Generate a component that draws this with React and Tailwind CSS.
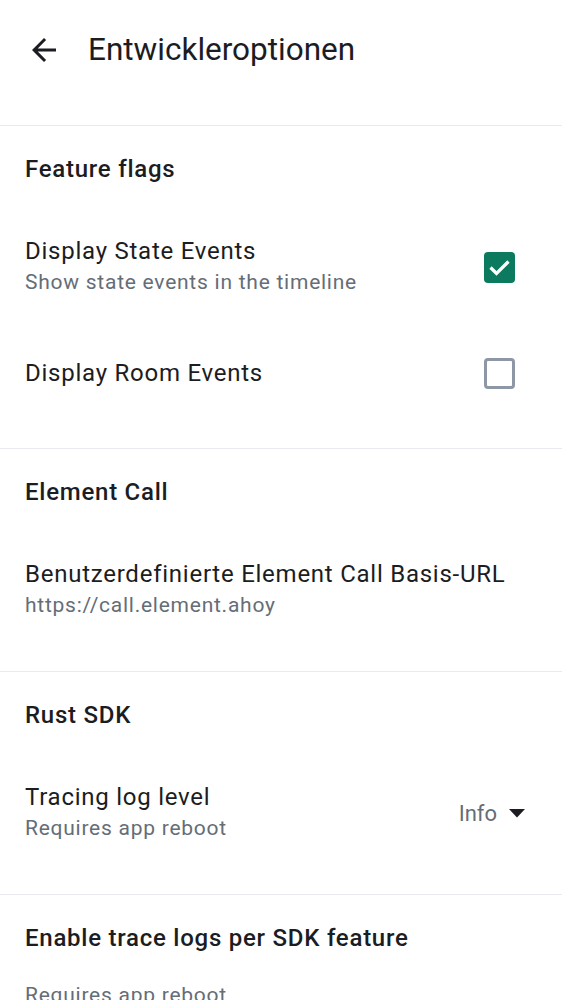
import React from 'react';

const Divider = () => <div className="h-px bg-[#e8eaed]" />;

const SectionHeader = ({ children }) => (
    <div className="h-[85px] flex items-center px-[25px]">
        <h2 className="text-[24px] leading-[30px] font-medium tracking-[0.75px] text-[#1b1d22]">{children}</h2>
    </div>
);

const Checkbox = ({ checked }) => (
    <div className="mr-[22px]">
        {checked ? (
            <div className="w-[31px] h-[31px] rounded-[4px] bg-[#0b7a5e] flex items-center justify-center">
                <svg width="31" height="31" viewBox="0 0 31 31" fill="none">
                    <path d="M6.5 15.5 L12.5 21.5 L24.5 9.5" stroke="white" strokeWidth="3.2" />
                </svg>
            </div>
        ) : (
            <div className="w-[31px] h-[31px] rounded-[4px] border-[3px] border-[#8d97a5]" />
        )}
    </div>
);

const PrefItem = ({ title, subtitle, right, height }) => (
    <div className={`flex items-center px-[25px] ${height}`}>
        <div className="flex-1 min-w-0">
            <p className="text-[24px] leading-[31px] tracking-[0.75px] text-[#1b1d22]">{title}</p>
            {subtitle && (
                <p className="text-[21px] leading-[31px] tracking-[0.75px] text-[#656d77]">{subtitle}</p>
            )}
        </div>
        {right}
    </div>
);

const Dropdown = ({ value }) => (
    <div className="flex items-center gap-[12px] pr-[12px]">
        <span className="text-[22px] text-[#656d77]">{value}</span>
        <svg width="16" height="9" viewBox="0 0 16 9">
            <path d="M0 0 L16 0 L8 8.5 Z" fill="#1b1d22" />
        </svg>
    </div>
);

export default function App() {
    return (
        <div className="w-[562px] h-[1000px] overflow-hidden bg-white font-['Roboto',sans-serif]">
            <header className="h-[100px] flex items-center">
                <button className="w-[36px] h-[36px] ml-[26px] flex items-center justify-center text-[#1b1d22]">
                    <svg width="36" height="36" viewBox="0 0 24 24" fill="currentColor">
                        <path d="M20 11H7.83l5.59-5.59L12 4l-8 8 8 8 1.41-1.41L7.83 13H20v-2z" />
                    </svg>
                </button>
                <h1 className="ml-[26px] text-[31.5px] text-[#1b1d22]">Entwickleroptionen</h1>
            </header>
            <div className="h-[25px]" />

            <Divider />
            <SectionHeader>Feature flags</SectionHeader>
            <PrefItem
                height="h-[112px]"
                title="Display State Events"
                subtitle="Show state events in the timeline"
                right={<Checkbox checked />}
            />
            <PrefItem height="h-[100px]" title="Display Room Events" right={<Checkbox />} />
            <div className="h-[25px]" />

            <Divider />
            <SectionHeader>Element Call</SectionHeader>
            <PrefItem
                height="h-[112px]"
                title="Benutzerdefinierte Element Call Basis-URL"
                subtitle="https://call.element.ahoy"
            />
            <div className="h-[25px]" />

            <Divider />
            <SectionHeader>Rust SDK</SectionHeader>
            <PrefItem
                height="h-[112px]"
                title="Tracing log level"
                subtitle="Requires app reboot"
                right={<Dropdown value="Info" />}
            />
            <div className="h-[25px]" />

            <Divider />
            <SectionHeader>Enable trace logs per SDK feature</SectionHeader>
            <p className="px-[25px] text-[21px] leading-[31px] tracking-[0.75px] text-[#656d77]">Requires app reboot</p>
        </div>
    );
}
